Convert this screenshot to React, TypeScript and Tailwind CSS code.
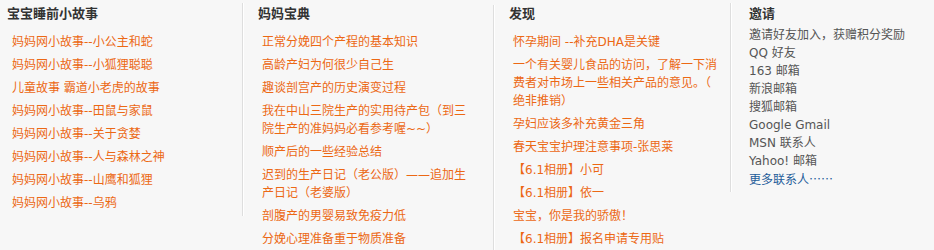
import React from "react";

const FONT = { fontFamily: '"DejaVu Sans", "Noto Sans CJK SC", sans-serif' };

function LinkList({ items, pl }: { items: string[]; pl: string }) {
  return (
    <ul className={`mt-[10px] flex flex-col gap-[5px] ${pl}`}>
      {items.map((t, i) => (
        <li key={i} className="w-[206px] text-[12px] leading-[18px] text-[#ec6814] [line-break:anywhere]">
          {t}
        </li>
      ))}
    </ul>
  );
}

function Sep({ cls }: { cls: string }) {
  return <div className={`w-[2px] shrink-0 border-l border-r border-l-[#dedede] border-r-white ${cls}`} />;
}

export default function App() {
  const col1 = [
    "妈妈网小故事--小公主和蛇",
    "妈妈网小故事--小狐狸聪聪",
    "儿童故事 霸道小老虎的故事",
    "妈妈网小故事--田鼠与家鼠",
    "妈妈网小故事--关于贪婪",
    "妈妈网小故事--人与森林之神",
    "妈妈网小故事--山鹰和狐狸",
    "妈妈网小故事--乌鸦",
  ];
  const col2 = [
    "正常分娩四个产程的基本知识",
    "高龄产妇为何很少自己生",
    "趣谈剖宫产的历史演变过程",
    "我在中山三院生产的实用待产包（到三院生产的准妈妈必看参考喔~~）",
    "顺产后的一些经验总结",
    "迟到的生产日记（老公版）——追加生产日记（老婆版）",
    "剖腹产的男婴易致免疫力低",
    "分娩心理准备重于物质准备",
  ];
  const col3 = [
    "怀孕期间 --补充DHA是关键",
    "一个有关婴儿食品的访问，了解一下消费者对市场上一些相关产品的意见。（绝非推销）",
    "孕妇应该多补充黄金三角",
    "春天宝宝护理注意事项-张思莱",
    "【6.1相册】小可",
    "【6.1相册】依一",
    "宝宝，你是我的骄傲！",
    "【6.1相册】报名申请专用贴",
  ];
  const col4 = [
    "邀请好友加入，获赠积分奖励",
    "QQ 好友",
    "163 邮箱",
    "新浪邮箱",
    "搜狐邮箱",
    "Google Gmail",
    "MSN 联系人",
    "Yahoo! 邮箱",
  ];
  return (
    <div className="flex h-[250px] w-[934px] overflow-hidden bg-[#f7f7f7]" style={FONT}>
      <div className="w-[242px] shrink-0 pl-[7px] pt-[5px]">
        <h3 className="text-[13px] font-bold leading-[18px] text-[#333]">宝宝睡前小故事</h3>
        <LinkList items={col1} pl="pl-[5px]" />
      </div>
      <Sep cls="mt-[3px] h-[213px]" />
      <div className="w-[249px] shrink-0 pl-[14px] pt-[5px]">
        <h3 className="text-[13px] font-bold leading-[18px] text-[#333]">妈妈宝典</h3>
        <LinkList items={col2} pl="pl-[4px]" />
      </div>
      <Sep cls="mt-[5px] h-[245px]" />
      <div className="w-[235px] shrink-0 pl-[14px] pt-[5px]">
        <h3 className="text-[13px] font-bold leading-[18px] text-[#333]">发现</h3>
        <LinkList items={col3} pl="pl-[4px]" />
      </div>
      <Sep cls="mt-[3px] h-[189px]" />
      <div className="flex-1 pl-[17px] pt-[5px]">
        <h3 className="text-[13px] font-bold leading-[18px] text-[#333]">邀请</h3>
        <ul className="mt-[3px] flex flex-col">
          {col4.map((t, i) => (
            <li key={i} className="text-[12px] leading-[18px] text-[#555]">
              {t}
            </li>
          ))}
          <li className="text-[12px] leading-[18px] text-[#1f5d9a]">
            更多联系人
            <span className="[font-family:'Noto_Sans_CJK_SC',sans-serif]">……</span>
          </li>
        </ul>
      </div>
    </div>
  );
}
